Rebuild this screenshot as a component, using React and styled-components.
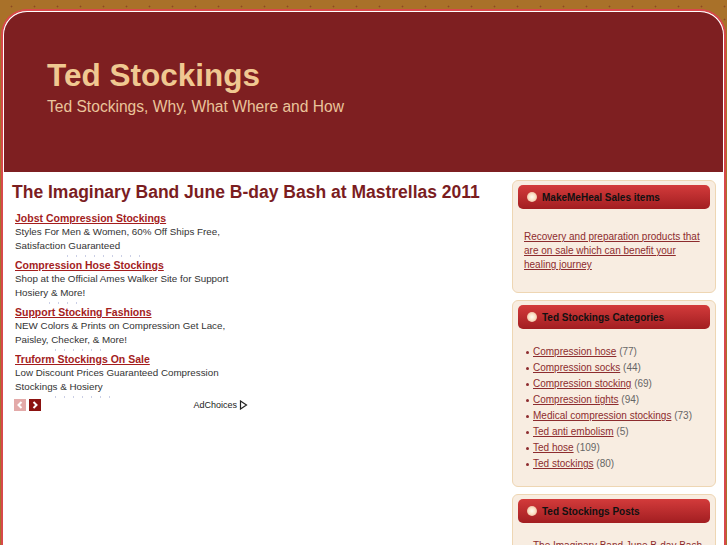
import React from 'react';
import styled, { createGlobalStyle } from 'styled-components';

const GlobalStyle = createGlobalStyle`
  html, body {
    margin: 0;
    padding: 0;
    overflow: hidden;
  }
  body {
    background-color: #a97129;
    background-image: radial-gradient(circle, rgba(120, 45, 30, 0.6) 0.6px, transparent 1.2px);
    background-size: 23px 13px;
    font-family: "Liberation Sans", Arial, sans-serif;
  }
`;

const Page = styled.div`
  height: 545px;
  box-sizing: border-box;
  padding: 9px 1px 0;
`;

const Frame = styled.div`
  height: 100%;
  box-sizing: border-box;
  background: #fff;
  border: 2px solid #d8484b;
  border-bottom: 0;
  border-radius: 26px 26px 0 0;
  overflow: hidden;
`;

const Header = styled.header`
  height: 161px;
  box-sizing: border-box;
  background: #7e1f21;
  border: 1px solid #fff;
  border-bottom: 0;
  border-radius: 24px 24px 0 0;
  padding: 45px 0 0 43px;
`;

const SiteTitle = styled.h1`
  margin: 0;
  font-size: 31.5px;
  line-height: 36px;
  font-weight: bold;
  color: #f0c891;
`;

const Tagline = styled.p`
  margin: 5px 0 0;
  font-size: 15.6px;
  line-height: 18px;
  color: #eac49b;
`;

const Body = styled.div`
  display: flex;
  padding: 0 8px 0 9px;
`;

const Main = styled.main`
  flex: 1;
  padding-top: 9px;
`;

const PostTitle = styled.h2`
  margin: 0 0 8px;
  font-size: 17.5px;
  line-height: 22px;
  font-weight: bold;
  color: #7b1d1f;
`;

const AdList = styled.div`
  margin-left: 3px;
  width: 236px;
`;

const Ad = styled.div`
  height: 47px;
  overflow: hidden;
`;

const AdLink = styled.a`
  display: block;
  font-size: 10.5px;
  line-height: 14px;
  font-weight: bold;
  color: #a41d1d;
  text-decoration: underline;
  white-space: nowrap;
`;

const AdText = styled.div`
  font-size: 9.8px;
  line-height: 14px;
  color: #333;
  white-space: nowrap;
`;

const AdUrlCut = styled.div`
  margin: 2px 0 0 ${p => p.$x}px;
  width: ${p => p.$w}px;
  height: 2px;
  background-image: radial-gradient(circle, rgba(140, 150, 200, 0.45) 0.6px, transparent 1px);
  background-size: 9px 2px;
`;

const NavRow = styled.div`
  display: flex;
  align-items: center;
  margin-left: -1px;
  width: 234px;
  height: 12px;
  gap: 3px;
`;

const Arrow = styled.span`
  width: 12px;
  height: 12px;
  display: flex;
  align-items: center;
  justify-content: center;
  background: ${p => (p.$active ? '#8b1210' : '#e3aaa9')};
`;

const AdChoices = styled.span`
  margin-left: auto;
  display: flex;
  align-items: center;
  gap: 2px;
  font-size: 9px;
  color: #222;
`;

const Sidebar = styled.aside`
  width: 204px;
  padding-top: 8px;
  flex-shrink: 0;
`;

const Box = styled.section`
  background: #f8ede1;
  border: 1px solid #eed6b3;
  border-radius: 6px;
  padding: 4px 5px;
  margin-bottom: 7px;
`;

const BoxHead = styled.div`
  height: 24px;
  border-radius: 5px;
  background: linear-gradient(#d33b3b, #a21e21);
  display: flex;
  align-items: center;
  gap: 5px;
  padding-left: 9px;
`;

const Dot = styled.span`
  width: 10px;
  height: 10px;
  border-radius: 50%;
  background: radial-gradient(circle, #fffaf0 0, #fbe3c6 45%, #e49a84 100%);
`;

const BoxTitle = styled.h3`
  margin: 0;
  font-size: 10px;
  font-weight: bold;
  color: #111;
`;

const BoxBody = styled.div`
  padding: ${p => p.$top}px 6px ${p => p.$bottom}px;
  font-size: 10px;
  line-height: 14px;
`;

const SideLink = styled.a`
  color: #8d2c2e;
  text-decoration: underline;
`;

const CatList = styled.ul`
  list-style: none;
  margin: 0;
  padding: 0 0 0 9px;
`;

const CatItem = styled.li`
  position: relative;
  line-height: 16px;
  color: #666;
  white-space: nowrap;

  &::before {
    content: '';
    position: absolute;
    left: -7px;
    top: 7px;
    width: 3px;
    height: 3px;
    border-radius: 50%;
    background: #8d2c2e;
  }
`;

const ads = [
  {
    title: 'Jobst Compression Stockings',
    lines: ['Styles For Men & Women, 60% Off Ships Free,', 'Satisfaction Guaranteed'],
    url: [48, 80],
  },
  {
    title: 'Compression Hose Stockings',
    lines: ['Shop at the Official Ames Walker Site for Support', 'Hosiery & More!'],
    url: [30, 40],
  },
  {
    title: 'Support Stocking Fashions',
    lines: ['NEW Colors & Prints on Compression Get Lace,', 'Paisley, Checker, & More!'],
    url: [36, 56],
  },
  {
    title: 'Truform Stockings On Sale',
    lines: ['Low Discount Prices Guaranteed Compression', 'Stockings & Hosiery'],
    url: [36, 60],
  },
];

const categories = [
  ['Compression hose', 77],
  ['Compression socks', 44],
  ['Compression stocking', 69],
  ['Compression tights', 94],
  ['Medical compression stockings', 73],
  ['Ted anti embolism', 5],
  ['Ted hose', 109],
  ['Ted stockings', 80],
];

const Chevron = ({ left }) => (
  <svg width="8" height="8" viewBox="0 0 8 8">
    <polyline
      points={left ? '5.5,1 2.5,4 5.5,7' : '2.5,1 5.5,4 2.5,7'}
      fill="none"
      stroke="#fff"
      strokeWidth="2"
    />
  </svg>
);

const App = () => (
  <>
    <GlobalStyle />
    <Page>
      <Frame>
        <Header>
          <SiteTitle>Ted Stockings</SiteTitle>
          <Tagline>Ted Stockings, Why, What Where and How</Tagline>
        </Header>
        <Body>
          <Main>
            <PostTitle>The Imaginary Band June B-day Bash at Mastrellas 2011</PostTitle>
            <AdList>
              {ads.map(ad => (
                <Ad key={ad.title}>
                  <AdLink href="#">{ad.title}</AdLink>
                  {ad.lines.map(line => (
                    <AdText key={line}>{line}</AdText>
                  ))}
                  <AdUrlCut $x={ad.url[0]} $w={ad.url[1]} />
                </Ad>
              ))}
              <NavRow>
                <Arrow>
                  <Chevron left />
                </Arrow>
                <Arrow $active>
                  <Chevron />
                </Arrow>
                <AdChoices>
                  AdChoices
                  <svg width="9" height="10" viewBox="0 0 9 10">
                    <polygon points="1.5,1 7.5,5 1.5,9" fill="none" stroke="#222" strokeWidth="1.2" />
                  </svg>
                </AdChoices>
              </NavRow>
            </AdList>
          </Main>
          <Sidebar>
            <Box>
              <BoxHead>
                <Dot />
                <BoxTitle>MakeMeHeal Sales items</BoxTitle>
              </BoxHead>
              <BoxBody $top={21} $bottom={16}>
                <SideLink href="#">
                  Recovery and preparation products that are on sale which can benefit your healing journey
                </SideLink>
              </BoxBody>
            </Box>
            <Box>
              <BoxHead>
                <Dot />
                <BoxTitle>Ted Stockings Categories</BoxTitle>
              </BoxHead>
              <BoxBody $top={15} $bottom={10}>
                <CatList>
                  {categories.map(([name, count]) => (
                    <CatItem key={name}>
                      <SideLink href="#">{name}</SideLink> ({count})
                    </CatItem>
                  ))}
                </CatList>
              </BoxBody>
            </Box>
            <Box>
              <BoxHead>
                <Dot />
                <BoxTitle>Ted Stockings Posts</BoxTitle>
              </BoxHead>
              <BoxBody $top={15} $bottom={10}>
                <CatList>
                  <CatItem>
                    <SideLink href="#">The Imaginary Band June B-day Bash</SideLink>
                  </CatItem>
                </CatList>
              </BoxBody>
            </Box>
          </Sidebar>
        </Body>
      </Frame>
    </Page>
  </>
);

export default App;
